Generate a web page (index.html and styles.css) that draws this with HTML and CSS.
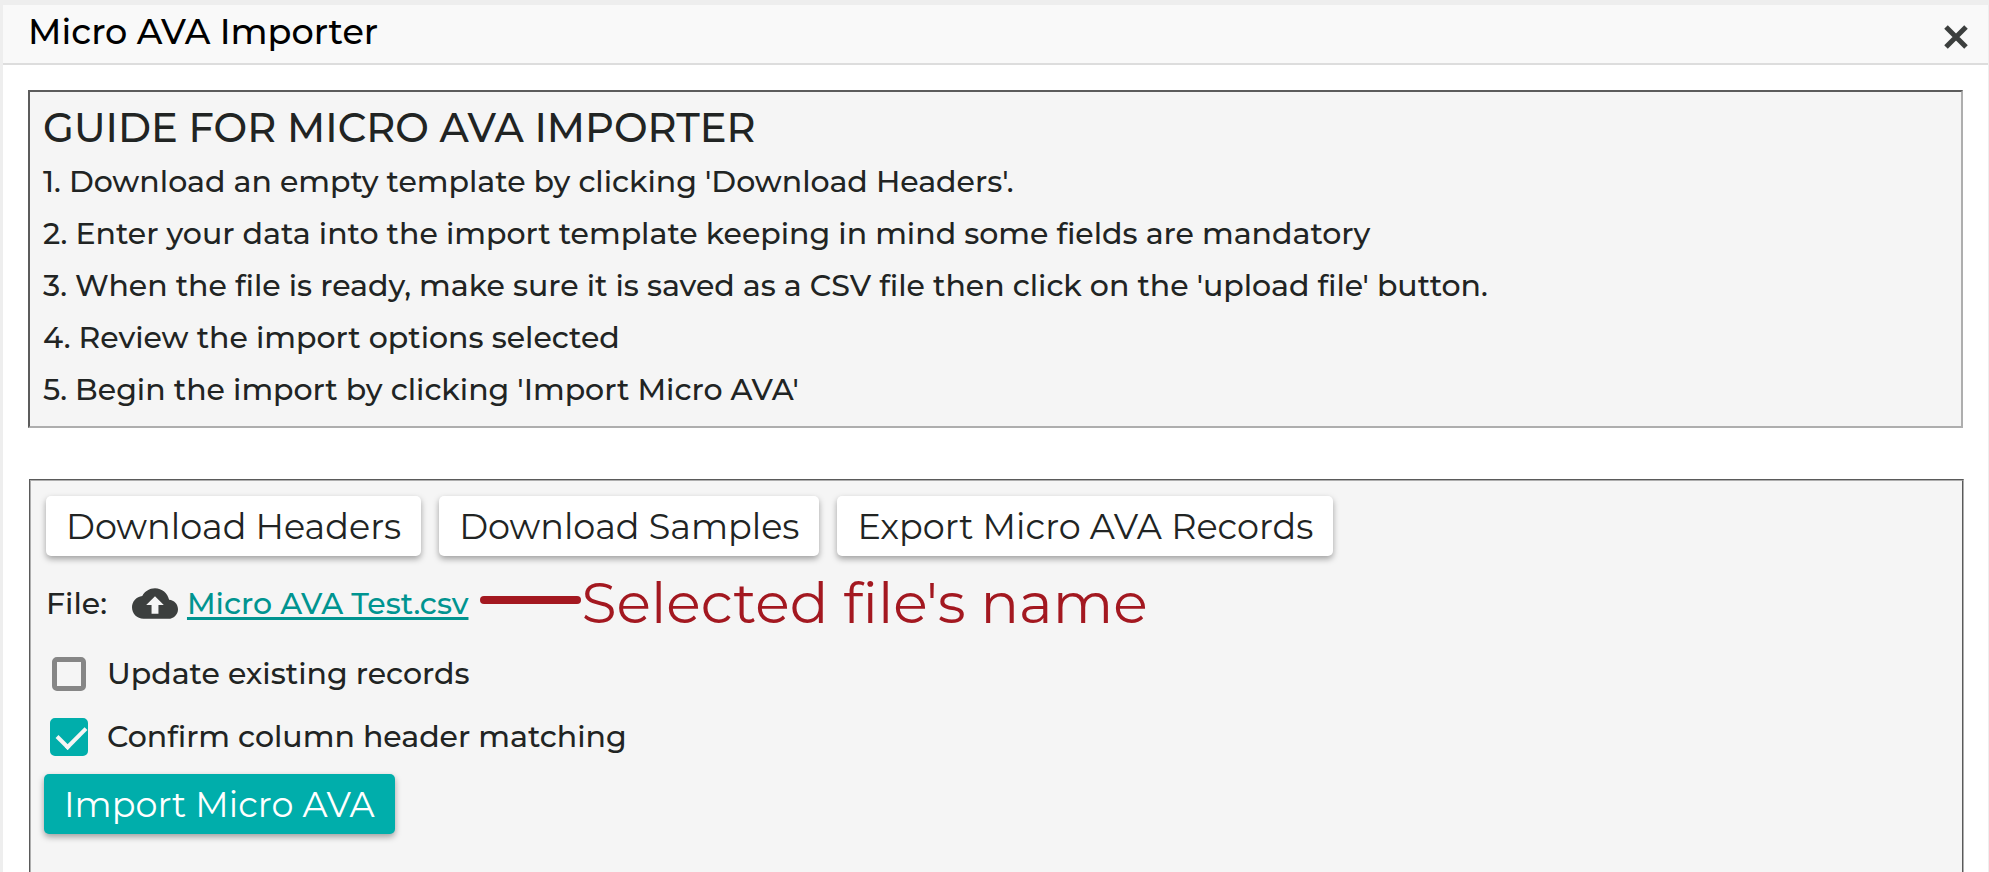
FILE: index.html
```html
<!DOCTYPE html>
<html lang="en">
<head>
    <meta charset="UTF-8">
    <meta name="viewport" content="width=device-width, initial-scale=1.0">
    <title>Micro AVA Importer</title>
    <link rel="stylesheet" href="styles.css">
</head>
<body>

    <div class="window">
        <header class="window-header">
            <h1>Micro AVA Importer</h1>
            <button type="button" class="close-btn" aria-label="Close">
                <svg viewBox="0 0 26 26" width="26" height="26">
                    <path d="M3 3L23 23M23 3L3 23" stroke="#3c3f3e" stroke-width="5" fill="none"/>
                </svg>
            </button>
        </header>

        <main class="content">
            <!-- Guide -->
            <section class="guide">
                <h2>GUIDE FOR MICRO AVA IMPORTER</h2>
                <p>1. Download an empty template by clicking 'Download Headers'.</p>
                <p>2. Enter your data into the import template keeping in mind some fields are mandatory</p>
                <p>3. When the file is ready, make sure it is saved as a CSV file then click on the 'upload file' button.</p>
                <p>4. Review the import options selected</p>
                <p>5. Begin the import by clicking 'Import Micro AVA'</p>
            </section>

            <!-- Import form -->
            <form class="importer">
                <div class="buttons">
                    <button type="button" class="btn">Download Headers</button>
                    <button type="button" class="btn">Download Samples</button>
                    <button type="button" class="btn">Export Micro AVA Records</button>
                </div>

                <div class="file-row">
                    <span class="file-label">File:</span>
                    <button type="button" class="upload-btn" aria-label="Upload file">
                        <svg viewBox="0 4 24 16" width="46" height="31">
                            <path fill="#3c3f3e" d="M19.35 10.04C18.67 6.59 15.64 4 12 4 9.11 4 6.6 5.64 5.35 8.04 2.34 8.36 0 10.91 0 14c0 3.31 2.69 6 6 6h13c2.76 0 5-2.24 5-5 0-2.64-2.05-4.78-4.65-4.96z"/>
                            <path fill="#f5f5f5" d="M13.8 12.8v4.6h-3.6v-4.6H7.4L12 8.2l4.6 4.6z"/>
                        </svg>
                    </button>
                    <a href="#" class="file-link">Micro AVA Test.csv</a>
                    <span class="note-line"></span>
                    <span class="note">Selected file's name</span>
                </div>

                <div class="option">
                    <input type="checkbox" id="update-existing">
                    <label for="update-existing">Update existing records</label>
                </div>
                <div class="option">
                    <input type="checkbox" id="confirm-headers" checked>
                    <label for="confirm-headers">Confirm column header matching</label>
                </div>

                <button type="button" class="btn btn-primary">Import Micro AVA</button>
            </form>
        </main>
    </div>

</body>
</html>
```
FILE: styles.css
```css
* {
    box-sizing: border-box;
}

body {
    margin: 0;
    padding: 5px 1px 0 3px;
    height: 100vh;
    overflow: hidden;
    background: #eee;
    color: #212423;
    font-family: 'Montserrat', 'Inter', sans-serif;
    font-size: 30px;
    font-weight: 500;
}

h1, h2, p {
    margin: 0;
    font-weight: 500;
}

button {
    font-family: inherit;
    cursor: pointer;
}

svg {
    display: block;
}

.window {
    display: flex;
    flex-direction: column;
    height: 100%;
    background: #fff;
}

.window-header {
    display: flex;
    justify-content: space-between;
    align-items: center;
    height: 60px;
    padding: 0 19px 0 25px;
    background: #f9f9f9;
    border-bottom: 2px solid #ddd;
}

h1 {
    padding-bottom: 4px;
    font-size: 35px;
    line-height: 48px;
    color: #000;
}

.close-btn, .upload-btn {
    padding: 0;
    border: 0;
    background: none;
}

.close-btn {
    padding-top: 6px;
}

.content {
    flex: 1;
    display: flex;
    flex-direction: column;
    gap: 51px;
    padding: 25px 25px 0 25px;
}

.guide {
    padding: 10px 13px;
    background: #f5f5f5;
    border: 2px solid;
    border-color: #5c5c5c #aeaeae #aeaeae #5c5c5c;
}

h2 {
    margin-bottom: 2px;
    font-size: 40px;
    line-height: 52px;
}

.guide p {
    line-height: 52px;
}

.importer {
    flex: 1;
    margin: 0 -1px 0 1px;
    padding: 15px 13px;
    background: #f5f5f5;
    border: 2px groove #aeaeae;
    border-bottom: 0;
}

.buttons {
    display: flex;
    gap: 18px;
    padding: 0 2px;
}

.btn {
    height: 60px;
    padding: 0 20px;
    border: 0;
    border-radius: 5px;
    background: #fff;
    color: #212423;
    font-size: 35px;
    font-weight: 400;
    box-shadow: 0 3px 6px rgba(0, 0, 0, 0.35);
}

.btn-primary {
    margin-top: 6px;
    background: #00aeab;
    color: #fff;
}

.file-row {
    display: flex;
    align-items: center;
    height: 66px;
    margin: 14px 0 6px;
    padding: 0 2px;
}

.upload-btn {
    margin: 0 9px 0 25px;
}

.file-link {
    color: #009490;
    text-decoration-thickness: 3px;
    text-underline-offset: 3px;
}

.note-line {
    width: 101px;
    height: 8px;
    margin: 0 0 6px 12px;
    border-radius: 4px;
    background: #a31820;
}

.note {
    color: #a31820;
    font-size: 57px;
    font-weight: 400;
    line-height: 64px;
}

.option {
    display: flex;
    align-items: center;
    gap: 19px;
    height: 63px;
    padding-left: 6px;
}

.option input {
    appearance: none;
    position: relative;
    width: 34px;
    height: 34px;
    margin: 0 2px;
    border: 5px solid #868686;
    border-radius: 5px;
}

.option input:checked {
    width: 38px;
    height: 38px;
    margin: 0;
    background: #00aeab;
    border-color: #00aeab;
}

/* check mark */
.option input:checked::after {
    content: '';
    position: absolute;
    left: 8px;
    top: -3px;
    width: 13px;
    height: 24px;
    border: solid #f5f5f5;
    border-width: 0 4px 4px 0;
    transform: rotate(45deg);
}
```
